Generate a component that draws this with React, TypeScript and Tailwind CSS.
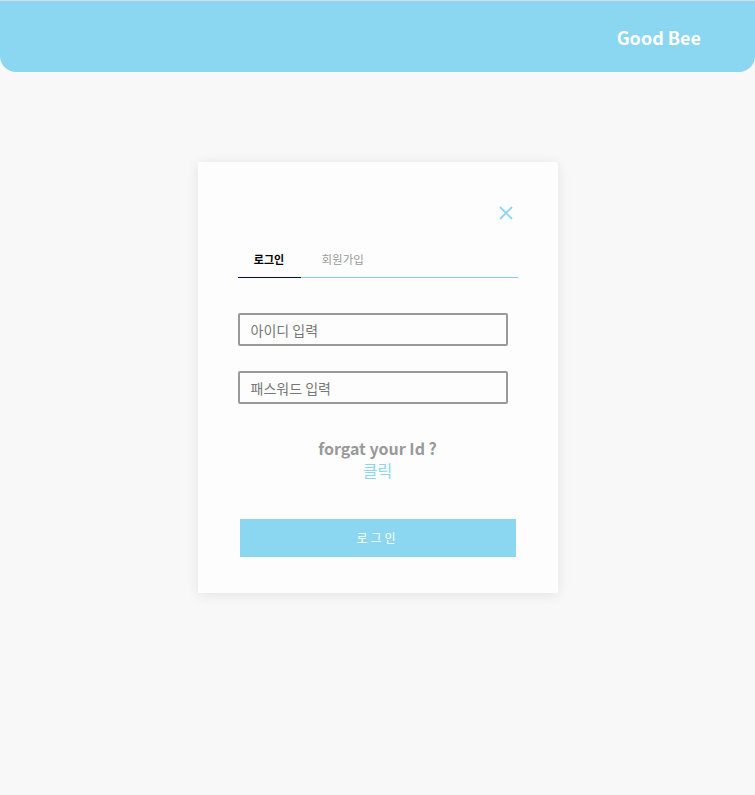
import React from 'react';

const font = { fontFamily: '"Noto Sans CJK KR", "Noto Sans", sans-serif' };

export default function App() {
  return (
    <div className="min-h-[795px] bg-[#f8f8f8] border-t border-[#d3dbe4]" style={font}>
      <header className="h-[71px] bg-[#8bd6f1] rounded-b-[16px] flex items-center justify-end pr-[54px]">
        <span className="text-white text-[18px] font-bold leading-none">Good Bee</span>
      </header>

      <div className="mt-[90px] mx-auto w-[360px] bg-[#fdfdfd] shadow-[0_2px_12px_rgba(0,0,0,0.09)] pt-[44px] px-[40px] pb-[36px]">
        <div className="flex justify-end pr-[5px]">
          <svg width="14" height="14" viewBox="0 0 14 14" fill="none" stroke="#8bd6f1" strokeWidth="1.8">
            <path d="M1 1L13 13M13 1L1 13" />
          </svg>
        </div>

        {/* tabs */}
        <div className="mt-[31px] flex border-b border-[#7fd3f0]">
          <div className="w-[63px] h-[27px] text-center text-[11px] leading-[16px] font-bold text-black border-b border-[#000080] -mb-px">
            로그인
          </div>
          <div className="pl-[21px] text-[11.5px] leading-[16px] text-[#9a9a9a]">회원가입</div>
        </div>

        <input
          className="mt-[35px] block w-[270px] h-[33px] border-2 border-[#9a9a9a] rounded-[2px] px-[11px] text-[14px] outline-none placeholder:text-[#777]"
          placeholder="아이디 입력"
        />
        <input
          type="password"
          className="mt-[25px] block w-[270px] h-[33px] border-2 border-[#9a9a9a] rounded-[2px] px-[11px] text-[14px] outline-none placeholder:text-[#777]"
          placeholder="패스워드 입력"
        />

        <div className="mt-[34px] text-center">
          <p className="text-[16px] leading-[20px] font-bold text-[#999]">forgat your Id ?</p>
          <p className="mt-[2px] text-[16px] leading-[20px] text-[#8bd6f1]">클릭</p>
        </div>

        <button className="mt-[39px] ml-[2px] w-[276px] h-[38px] bg-[#8bd6f1] text-white text-[12px] tracking-[3px] flex items-center justify-center">
          로그인
        </button>
      </div>
    </div>
  );
}
